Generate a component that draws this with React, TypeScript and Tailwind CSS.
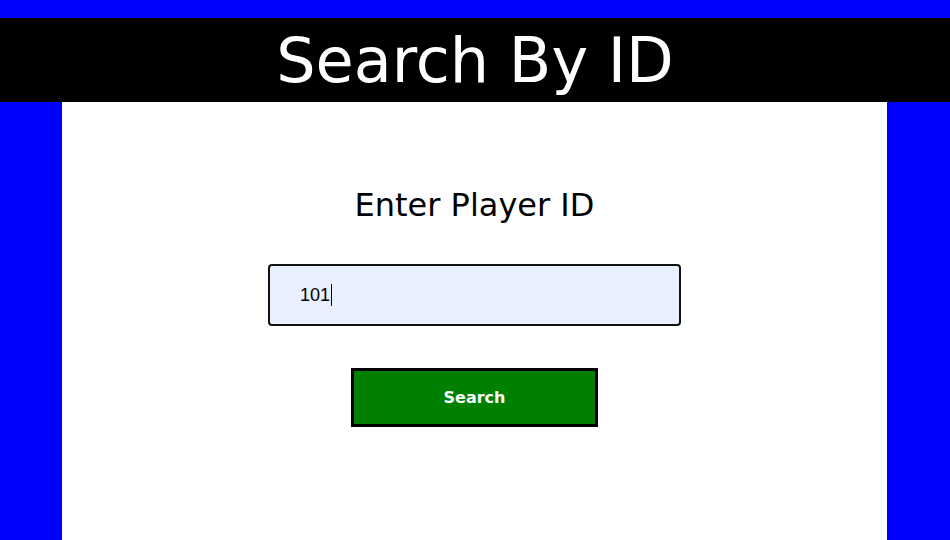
export default function App() {
  return (
    <div className="min-h-[540px] w-[950px] bg-[#0000ff] pt-[18px] font-['DejaVu_Sans',sans-serif]">
      {/* Header */}
      <div className="flex h-[84px] items-center justify-center bg-black">
        <h1 className="pt-[2px] text-[62px] leading-none text-white">Search By ID</h1>
      </div>

      {/* Panel */}
      <div className="ml-[62px] mr-[63px] flex h-[438px] flex-col items-center bg-white pt-[80px]">
        <h2 className="text-[32px] leading-[46px] text-black">Enter Player ID</h2>

        <div className="mt-[36px] flex h-[62px] w-[413px] items-center rounded-[4px] border-2 border-[#111] bg-[#e8f0fe] pl-[30px] font-['Liberation_Sans',sans-serif] text-[18px] text-black">
          <span>101</span>
          <span className="ml-px h-[22px] w-px bg-black" />
        </div>

        <button className="mt-[42px] h-[59px] w-[247px] border-[3px] border-black bg-[#008000] text-[16px] font-bold text-white">
          Search
        </button>
      </div>
    </div>
  );
}
